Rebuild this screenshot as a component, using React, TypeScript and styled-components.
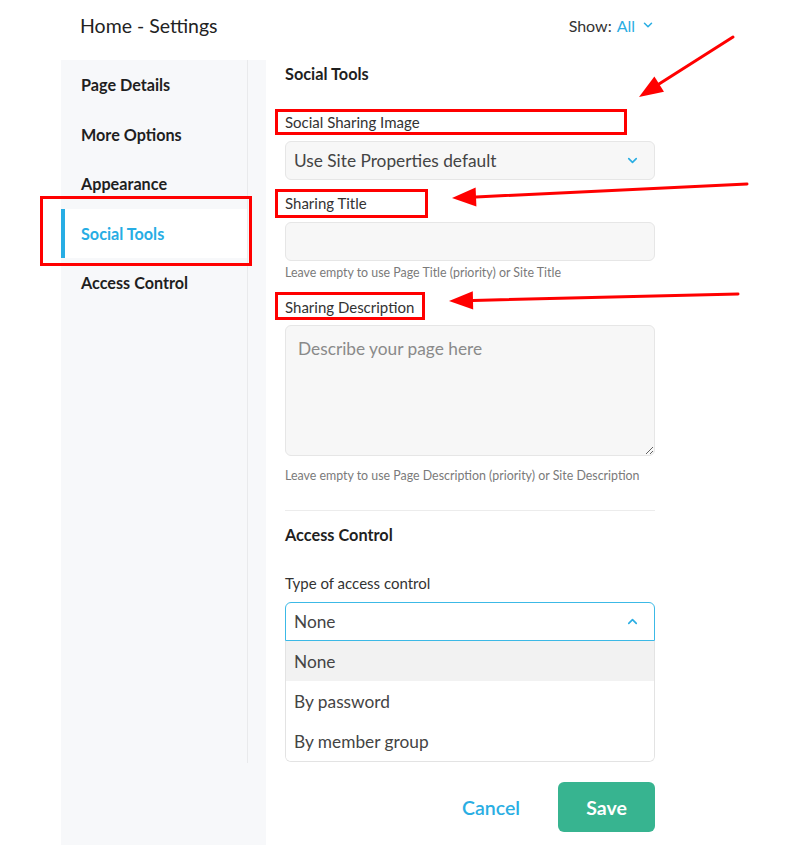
import styled, { createGlobalStyle } from 'styled-components';
import { ChevronDown, ChevronUp } from 'lucide-react';

const GlobalStyle = createGlobalStyle`
  html, body {
    margin: 0;
    padding: 0;
    background: #ffffff;
  }
  body {
    font-family: Lato, "Open Sans", "Noto Sans", sans-serif;
    color: #222222;
  }
  * {
    box-sizing: border-box;
  }
`;

const Page = styled.div`
  position: relative;
  width: 793px;
  height: 862px;
  overflow: hidden;
`;

const Header = styled.header`
  display: flex;
  align-items: center;
  justify-content: space-between;
  height: 60px;
  padding: 0 138px 10px 80px;
`;

const Title = styled.h1`
  margin: 0;
  font-size: 19.5px;
  font-weight: 400;
  color: #222222;
`;

const ShowFilter = styled.div`
  display: flex;
  align-items: center;
  gap: 5px;
  font-size: 16px;
  color: #333333;
`;

const ShowValue = styled.span`
  display: flex;
  align-items: center;
  gap: 6px;
  color: #2aaee3;
`;

const Body = styled.div`
  display: flex;
  padding-left: 61px;
`;

const Sidebar = styled.aside`
  width: 205px;
  height: 785px;
  background: #f7f8fa;
`;

const Nav = styled.nav`
  display: flex;
  flex-direction: column;
  width: 187px;
  height: 703px;
  border-right: 1px solid #e9eaec;
`;

const NavItem = styled.div<{ $active?: boolean }>`
  display: flex;
  align-items: center;
  height: 49.5px;
  padding-left: 16px;
  font-size: 16.2px;
  font-weight: 700;
  color: ${(p) => (p.$active ? '#27ade4' : '#1f1f1f')};
  background: ${(p) => (p.$active ? '#ffffff' : 'transparent')};
  border-left: 4px solid ${(p) => (p.$active ? '#27ade4' : 'transparent')};
`;

const Content = styled.main`
  display: flex;
  flex-direction: column;
  width: 370px;
  margin-left: 19px;
  padding-top: 4px;
`;

const SectionTitle = styled.h2<{ $gap: number }>`
  margin: 0 0 ${(p) => p.$gap}px;
  font-size: 16.3px;
  line-height: 20px;
  font-weight: 700;
  color: #1f1f1f;
`;

const Label = styled.label<{ $top?: number; $bottom?: number }>`
  display: block;
  margin-top: ${(p) => p.$top ?? 0}px;
  margin-bottom: ${(p) => p.$bottom ?? 10}px;
  font-size: 15px;
  line-height: 18px;
  color: #333333;
`;

const SelectBox = styled.div<{ $open?: boolean }>`
  display: flex;
  align-items: center;
  justify-content: space-between;
  height: 39px;
  padding: 0 14px 0 8px;
  font-size: 17.3px;
  color: #444444;
  background: ${(p) => (p.$open ? '#ffffff' : '#f7f7f7')};
  border: 1px solid ${(p) => (p.$open ? '#3cb9e6' : '#e6e6e6')};
  border-radius: ${(p) => (p.$open ? '6px 6px 0 0' : '6px')};
`;

const TextInput = styled.input`
  display: block;
  width: 100%;
  height: 39px;
  padding: 0 12px;
  font-family: inherit;
  font-size: 17px;
  background: #f7f7f7;
  border: 1px solid #e6e6e6;
  border-radius: 6px;
  outline: none;
`;

const TextArea = styled.textarea`
  display: block;
  width: 100%;
  height: 131px;
  padding: 11px 12px;
  font-family: inherit;
  font-size: 17.3px;
  line-height: 24px;
  color: #444444;
  background: #f7f7f7;
  border: 1px solid #e6e6e6;
  border-radius: 6px;
  outline: none;
  resize: vertical;

  &::placeholder {
    color: #8a8a8a;
  }
`;

const Help = styled.p<{ $top: number }>`
  margin: ${(p) => p.$top}px 0 0;
  font-size: 12.4px;
  line-height: 14px;
  color: #7a7a7a;
`;

const Divider = styled.hr`
  width: 100%;
  height: 1px;
  margin: 27px 0 14px;
  border: 0;
  background: #ececec;
`;

const OptionList = styled.ul`
  margin: 0;
  padding: 0;
  list-style: none;
  border: 1px solid #e3e3e3;
  border-top: 0;
  border-radius: 0 0 6px 6px;
  overflow: hidden;
`;

const Option = styled.li<{ $active?: boolean }>`
  display: flex;
  align-items: center;
  height: 40px;
  padding-left: 8px;
  font-size: 17.3px;
  color: #444444;
  background: ${(p) => (p.$active ? '#f2f2f2' : '#ffffff')};
`;

const Actions = styled.div`
  display: flex;
  align-items: center;
  justify-content: flex-end;
  gap: 38px;
  margin-top: 20px;
`;

const CancelButton = styled.button`
  padding: 0;
  font-family: inherit;
  font-size: 19.5px;
  font-weight: 600;
  color: #2aaee3;
  background: none;
  border: 0;
`;

const SaveButton = styled.button`
  width: 97px;
  height: 50px;
  font-family: inherit;
  font-size: 19.5px;
  font-weight: 700;
  color: #ffffff;
  background: #37b490;
  border: 0;
  border-radius: 6px;
`;

const Annotations = styled.svg`
  position: absolute;
  top: 0;
  left: 0;
  pointer-events: none;
`;

const navItems = ['Page Details', 'More Options', 'Appearance', 'Social Tools', 'Access Control'];

const boxes = [
  { x: 276.5, y: 110.5, w: 349, h: 23 },
  { x: 276.5, y: 190.5, w: 150, h: 26 },
  { x: 276.5, y: 293.5, w: 147, h: 25 },
  { x: 41.5, y: 197.5, w: 209, h: 67 },
];

const arrows = [
  { line: '733,37 659,84', head: '639,97 664,91.7 654.4,76.5' },
  { line: '747,184 476,197', head: '452,198 476.4,206.5 475.6,187.5' },
  { line: '738,294 473,300.4', head: '449,301 473.2,309.6 472.8,291.2' },
];

export default function App() {
  return (
    <Page>
      <GlobalStyle />
      <Header>
        <Title>Home - Settings</Title>
        <ShowFilter>
          Show:
          <ShowValue>
            All
            <ChevronDown size={14} strokeWidth={2.6} />
          </ShowValue>
        </ShowFilter>
      </Header>
      <Body>
        <Sidebar>
          <Nav>
            {navItems.map((item) => (
              <NavItem key={item} $active={item === 'Social Tools'}>
                {item}
              </NavItem>
            ))}
          </Nav>
        </Sidebar>
        <Content>
          <SectionTitle $gap={29}>Social Tools</SectionTitle>
          <Label>Social Sharing Image</Label>
          <SelectBox>
            Use Site Properties default
            <ChevronDown size={15} strokeWidth={2.6} color="#2aaee3" />
          </SelectBox>
          <Label $top={14}>Sharing Title</Label>
          <TextInput type="text" />
          <Help $top={5}>Leave empty to use Page Title (priority) or Site Title</Help>
          <Label $top={18} $bottom={9}>
            Sharing Description
          </Label>
          <TextArea placeholder="Describe your page here" />
          <Help $top={13}>Leave empty to use Page Description (priority) or Site Description</Help>
          <Divider />
          <SectionTitle $gap={29}>Access Control</SectionTitle>
          <Label>Type of access control</Label>
          <SelectBox $open>
            None
            <ChevronUp size={15} strokeWidth={2.6} color="#2aaee3" />
          </SelectBox>
          <OptionList>
            <Option $active>None</Option>
            <Option>By password</Option>
            <Option>By member group</Option>
          </OptionList>
          <Actions>
            <CancelButton>Cancel</CancelButton>
            <SaveButton>Save</SaveButton>
          </Actions>
        </Content>
      </Body>
      <Annotations width={793} height={862} viewBox="0 0 793 862">
        {boxes.map((b) => (
          <rect
            key={`${b.x}-${b.y}`}
            x={b.x}
            y={b.y}
            width={b.w}
            height={b.h}
            fill="none"
            stroke="#ff0000"
            strokeWidth={3}
          />
        ))}
        {arrows.map((a) => (
          <g key={a.line}>
            <polyline points={a.line} fill="none" stroke="#ff0000" strokeWidth={3} strokeLinecap="round" />
            <polygon points={a.head} fill="#ff0000" />
          </g>
        ))}
      </Annotations>
    </Page>
  );
}
